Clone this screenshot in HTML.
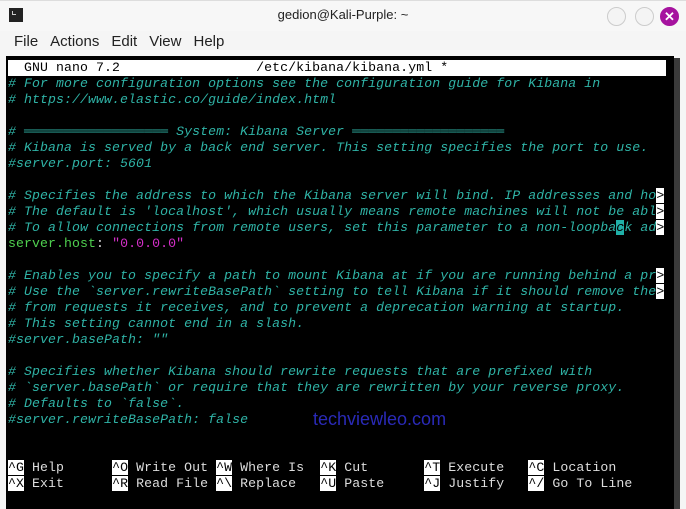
<!DOCTYPE html>
<html><head><style>
body{margin:0;width:686px;height:509px;background:#f5f5f5;position:relative;overflow:hidden;font-family:"Liberation Sans",sans-serif}
.tb{position:absolute;left:0;top:0;width:686px;height:30px;background:#f7f7f7;border-top:1px solid #ddd}
.title{position:absolute;top:6px;width:686px;text-align:center;font-size:13px;color:#222}
.ic{position:absolute;left:9px;top:7px;width:14px;height:14px;background:#222}
.ic:after{content:"";position:absolute;left:3px;top:3px;width:3px;height:3px;border-left:1px solid #ccc;border-bottom:1px solid #ccc}
.b{position:absolute;top:6px;width:17px;height:17px;border-radius:50%;border:1px solid #ccc;background:#f4f4f4}
.x{background:#a6139f;border-color:#a6139f;color:#fff;text-align:center;font-size:13px;line-height:17px;font-weight:bold}
.menu{position:absolute;top:33px;left:14px;font-size:15px;color:#222;word-spacing:0}
.menu span{margin-right:12px}
.term{position:absolute;left:6px;top:56px;width:668px;height:453px;background:#000}
.sb{position:absolute;left:674px;top:58px;width:6px;height:451px;background:#3a3a3a}
.t{position:absolute;left:8px;top:60px;font-family:"Liberation Mono","DejaVu Sans Mono",monospace;font-size:13.2px;letter-spacing:0.09px;line-height:16px;white-space:pre;color:#2fb3a6}
.c{font-style:italic}
.hd{background:#fff;color:#000;display:inline-block;width:658px}
.g{color:#4fd04f}.w{color:#ddd}.m{color:#d42fc8}
.k{background:#fff;color:#000}
.f{color:#ddd}
.cur{background:#20b0a8;color:#000}
.wm{position:absolute;left:313px;top:409px;color:#2a2ab8;font-size:18px}
</style></head><body>
<div class="tb"><div class="ic"></div><div class="title">gedion@Kali-Purple: ~</div>
<div class="b" style="left:607px"></div><div class="b" style="left:635px"></div><div class="b x" style="left:660px">✕</div></div>
<div class="menu"><span>File</span><span>Actions</span><span>Edit</span><span>View</span><span>Help</span></div>
<div class="term"></div><div class="sb"></div>
<div class="t"><span class="hd">  GNU nano 7.2                 /etc/kibana/kibana.yml *</span>
<span class="c"># For more configuration options see the configuration guide for Kibana in
# https://www.elastic.co/guide/index.html

# ══════════════════ System: Kibana Server ═══════════════════
# Kibana is served by a back end server. This setting specifies the port to use.
#server.port: 5601

# Specifies the address to which the Kibana server will bind. IP addresses and ho</span><span class="k">&gt;</span>
<span class="c"># The default is 'localhost', which usually means remote machines will not be abl</span><span class="k">&gt;</span>
<span class="c"># To allow connections from remote users, set this parameter to a non-loopba<span class="cur">c</span>k ad</span><span class="k">&gt;</span>
<span class="g">server.host</span><span class="w">: </span><span class="m">"0.0.0.0"</span>

<span class="c"># Enables you to specify a path to mount Kibana at if you are running behind a pr</span><span class="k">&gt;</span>
<span class="c"># Use the `server.rewriteBasePath` setting to tell Kibana if it should remove the</span><span class="k">&gt;</span>
<span class="c"># from requests it receives, and to prevent a deprecation warning at startup.
# This setting cannot end in a slash.
#server.basePath: ""

# Specifies whether Kibana should rewrite requests that are prefixed with
# `server.basePath` or require that they are rewritten by your reverse proxy.
# Defaults to `false`.
#server.rewriteBasePath: false</span>


<span class="f"><span class="k">^G</span> Help      <span class="k">^O</span> Write Out <span class="k">^W</span> Where Is  <span class="k">^K</span> Cut       <span class="k">^T</span> Execute   <span class="k">^C</span> Location
<span class="k">^X</span> Exit      <span class="k">^R</span> Read File <span class="k">^\</span> Replace   <span class="k">^U</span> Paste     <span class="k">^J</span> Justify   <span class="k">^/</span> Go To Line</span></div>
<div class="wm">techviewleo.com</div>
</body></html>
